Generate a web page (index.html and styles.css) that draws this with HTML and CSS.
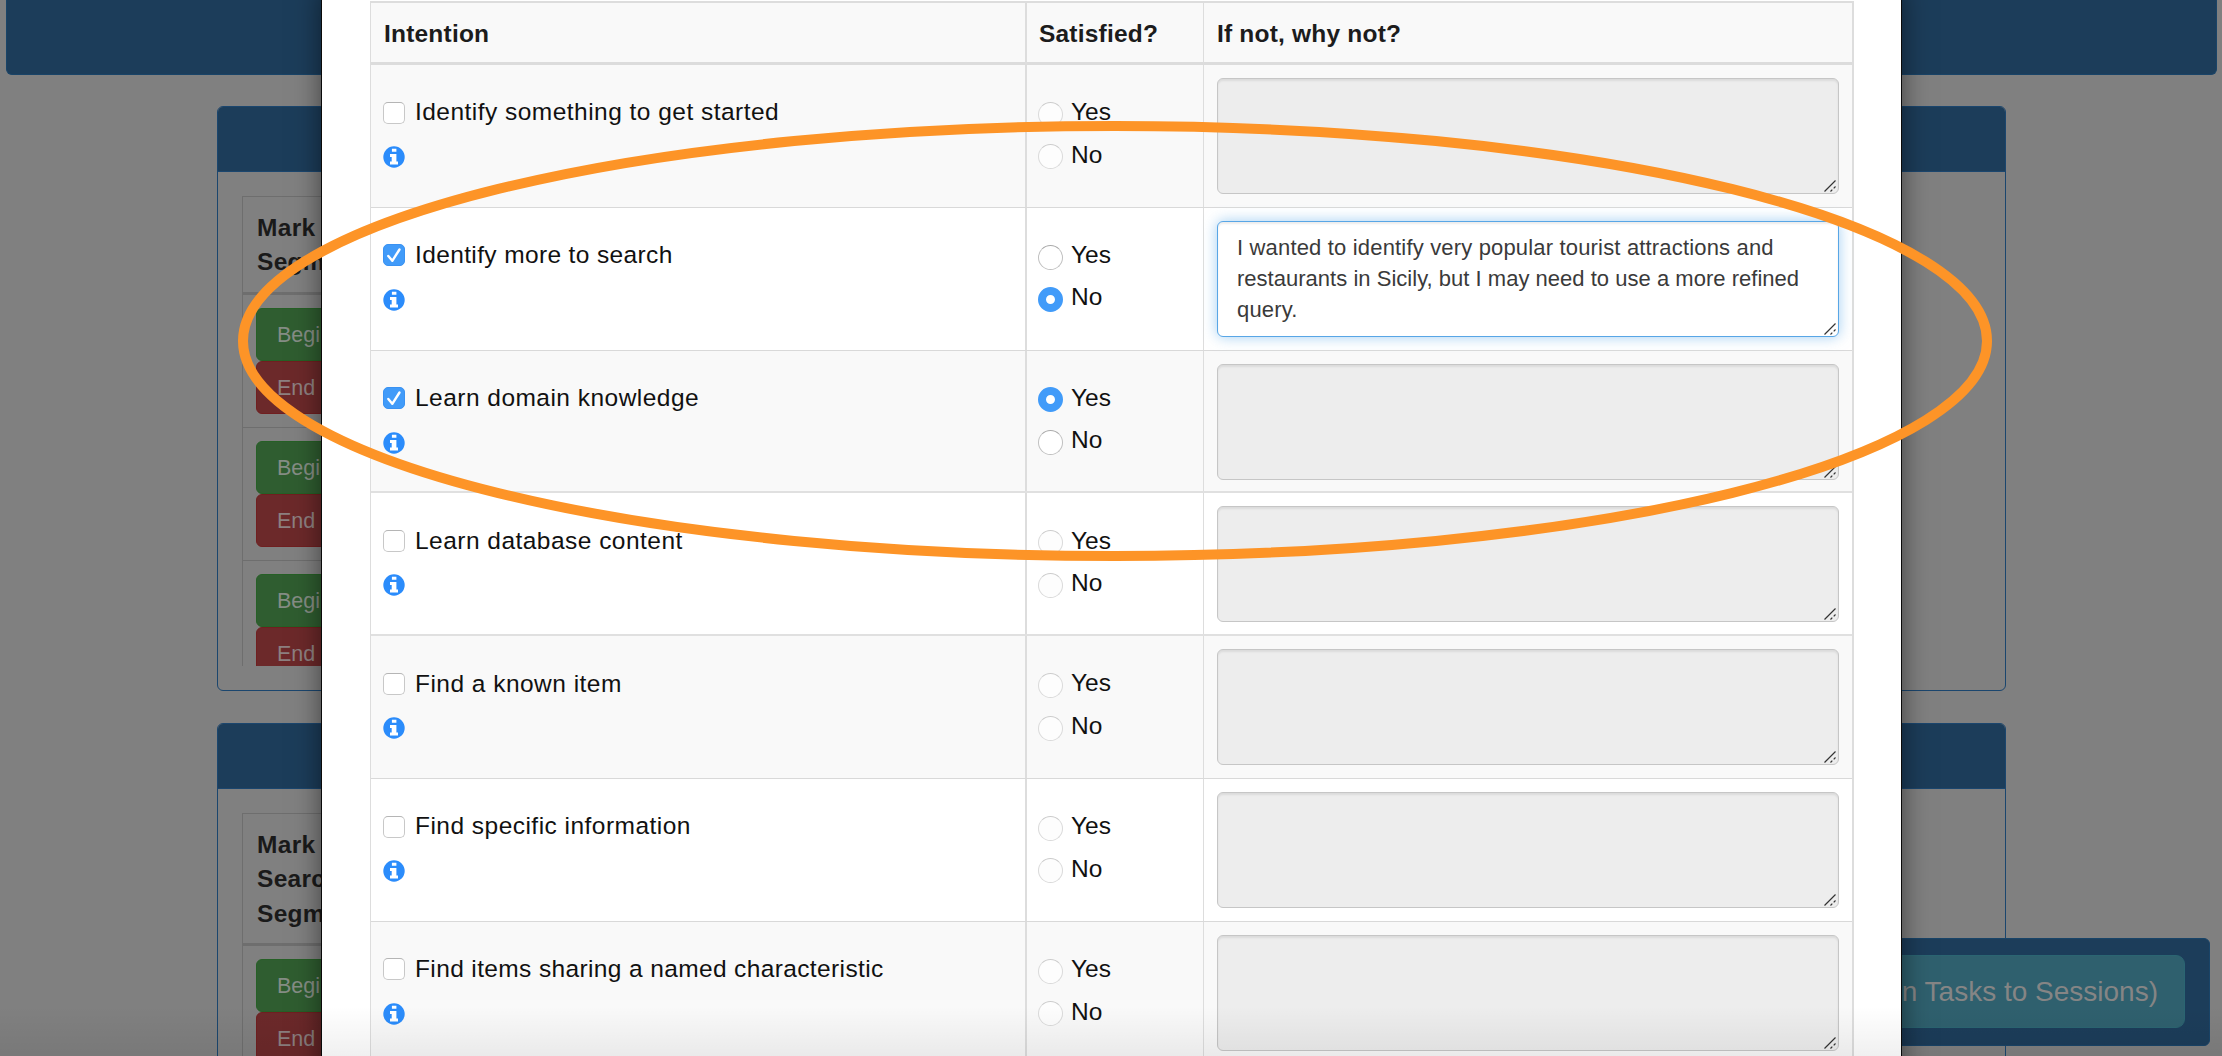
FILE: index.html
```html
<!DOCTYPE html>
<html lang="en">
<head>
<meta charset="utf-8">
<title>Search intentions</title>
<link rel="stylesheet" href="styles.css">
</head>
<body>
<svg class="defs" aria-hidden="true">
  <symbol id="info" viewBox="0 0 22 22"><circle cx="11" cy="11" r="10.7" fill="#2b8cfb"/><path fill="#fff" d="M8.900 2.700h4.500v3.100H8.900zM7 8h6.400v7.600h1.600v3H7v-3h1.700v-4.700H7z"/></symbol>
  <symbol id="grip" viewBox="0 0 12 12"><path d="M.5 11.500l11-11M6.500 11.500l1.800-1.800M9.700 8.300l1.800-1.800" fill="none" stroke="#333" stroke-width="1.200"/></symbol>
</svg>

<div class="page">
  <div class="topbar"></div>
  <section class="panel panel-first">
    <div class="panel-head"></div>
    <div class="segments">
      <div class="seg-title">Mark<br>Segment</div>
      <div class="seg-row"><span class="btn begin">Begin</span><span class="btn end">End</span></div>
      <div class="seg-row"><span class="btn begin">Begin</span><span class="btn end">End</span></div>
      <div class="seg-row"><span class="btn begin">Begin</span><span class="btn end">End</span></div>
    </div>
  </section>
  <section class="panel panel-second">
    <div class="panel-head"></div>
    <div class="segments">
      <div class="seg-title">Mark<br>Search<br>Segment</div>
      <div class="seg-row"><span class="btn begin">Begin</span><span class="btn end">End</span></div>
    </div>
  </section>
</div>
<div class="footer-bar"><span class="assign">Assign Tasks to Sessions)</span></div>

<main class="modal">
  <div class="table">
    <div class="row head"><div class="cell">Intention</div><div class="cell">Satisfied?</div><div class="cell">If not, why not?</div></div>

    <div class="row odd">
      <div class="cell what"><label><i class="check"></i>Identify something to get started</label><svg class="info"><use href="#info"/></svg></div>
      <div class="cell rate"><label><i class="radio off"></i>Yes</label><label><i class="radio off"></i>No</label></div>
      <div class="cell why"><div class="area"><svg class="grip"><use href="#grip"/></svg></div></div>
    </div>
    <div class="row">
      <div class="cell what snug"><label><i class="check on"><svg viewBox="0 0 22 22"><path d="M5.300 12l4 4.800 7.200-11.300"/></svg></i>Identify more to search</label><svg class="info"><use href="#info"/></svg></div>
      <div class="cell rate"><label><i class="radio"></i>Yes</label><label><i class="radio on"></i>No</label></div>
      <div class="cell why"><div class="area focus">I wanted to identify very popular tourist attractions and<br><span class="tight">restaurants in Sicily, but I may need to use a more refined</span><br>query.<svg class="grip"><use href="#grip"/></svg></div></div>
    </div>
    <div class="row odd thick">
      <div class="cell what"><label><i class="check on"><svg viewBox="0 0 22 22"><path d="M5.300 12l4 4.800 7.200-11.300"/></svg></i>Learn domain knowledge</label><svg class="info"><use href="#info"/></svg></div>
      <div class="cell rate"><label><i class="radio on"></i>Yes</label><label><i class="radio"></i>No</label></div>
      <div class="cell why"><div class="area"><svg class="grip"><use href="#grip"/></svg></div></div>
    </div>
    <div class="row thick">
      <div class="cell what"><label><i class="check"></i>Learn database content</label><svg class="info"><use href="#info"/></svg></div>
      <div class="cell rate"><label><i class="radio off"></i>Yes</label><label><i class="radio off"></i>No</label></div>
      <div class="cell why"><div class="area"><svg class="grip"><use href="#grip"/></svg></div></div>
    </div>
    <div class="row odd">
      <div class="cell what"><label><i class="check"></i>Find a known item</label><svg class="info"><use href="#info"/></svg></div>
      <div class="cell rate"><label><i class="radio off"></i>Yes</label><label><i class="radio off"></i>No</label></div>
      <div class="cell why"><div class="area"><svg class="grip"><use href="#grip"/></svg></div></div>
    </div>
    <div class="row">
      <div class="cell what"><label><i class="check"></i>Find specific information</label><svg class="info"><use href="#info"/></svg></div>
      <div class="cell rate"><label><i class="radio off"></i>Yes</label><label><i class="radio off"></i>No</label></div>
      <div class="cell why"><div class="area"><svg class="grip"><use href="#grip"/></svg></div></div>
    </div>
    <div class="row odd">
      <div class="cell what snug"><label><i class="check"></i>Find items sharing a named characteristic</label><svg class="info"><use href="#info"/></svg></div>
      <div class="cell rate"><label><i class="radio off"></i>Yes</label><label><i class="radio off"></i>No</label></div>
      <div class="cell why"><div class="area"><svg class="grip"><use href="#grip"/></svg></div></div>
    </div>
  </div>
</main>

<div class="bottom-shade"></div>
<svg class="highlight" viewBox="0 0 2222 1056"><ellipse cx="1115" cy="341" rx="872" ry="215"/></svg>
</body>
</html>
```

FILE: styles.css
```css
* { box-sizing: border-box; }
body {
  margin: 0;
  width: 2222px;
  height: 1056px;
  position: relative;
  overflow: hidden;
  background: #808080;
  color: #111;
  font: 24.5px/34.3px "Liberation Sans", Arial, sans-serif;
}
.defs { position: absolute; width: 0; height: 0; }

/* dimmed page behind the dialog */
.page { height: 1056px; overflow: hidden; }
.topbar {
  height: 75px;
  margin: 0 5px 31px 6px;
  background: #1c3d5a;
  border: 1px solid #194468;
  border-top: 0;
  border-radius: 0 0 6px 6px;
}
.panel {
  width: 1789px;
  margin: 0 0 32px 217px;
  border: 1.500px solid #1b466e;
  border-radius: 6px;
  overflow: hidden;
}
.panel-first { height: 585px; }
.panel-second { height: 420px; }
.panel-head { height: 65px; background: #1c3d5a; border-bottom: 1px solid #1b466e; }
.segments {
  width: 400px;
  margin: 24px 0 0 24px;
  border: 1px solid #6e6e6e;
  border-width: 1px 0 0 1px;
  overflow: hidden;
}
.panel-first .segments { height: 470px; }
.seg-title {
  padding: 14px 13px 12px 14px;
  border-bottom: 3px solid #6e6e6e;
  font-weight: bold;
  letter-spacing: .3px;
  color: #1a1a1a;
}
.seg-row {
  height: 133.300px;
  padding: 13px;
  border-bottom: 1px solid #6e6e6e;
  display: flex;
  flex-direction: column;
}
.btn {
  height: 53.300px;
  flex: none;
  padding: 0 20px;
  border-radius: 6px;
  border: 1px solid;
  font-size: 21.500px;
  line-height: 52px;
  color: #858d85;
}
.begin { background: #2f5d30; border-color: #266026; }
.end { background: #6c292a; border-color: #701f20; color: #8d8080; }
.footer-bar {
  position: absolute;
  left: 1200px;
  top: 938px;
  width: 1010px;
  height: 108px;
  padding: 16px 24px;
  background: #1c3d5a;
  border: 1px solid #194468;
  border-radius: 6px;
  display: flex;
  justify-content: flex-end;
}
.assign {
  height: 73px;
  padding: 0 26px 0 27px;
  border: 1px solid #2b6572;
  border-radius: 9px;
  background: #2f606e;
  color: #858585;
  font-size: 28px;
  line-height: 71px;
}

/* dialog */
.modal {
  position: absolute;
  left: 321px;
  top: -20px;
  width: 1581px;
  height: 1100px;
  padding: 20px 48px 0 49px;
  background: #fff;
  background-clip: padding-box;
  border: 1px solid #0a0a0a;
  box-shadow: 0 9px 26px rgba(0, 0, 0, .5);
}
.table {
  width: 1484px;
  border: 2px solid #ddd;
  border-left-width: 1px;
  margin-left: -1px;
}
.row {
  height: 142.830px;
  display: grid;
  grid-template-columns: 656px 177px 1fr;
  border-bottom: 1px solid #d9d9d9;
}
.row.thick { border-bottom: 2px solid #e0e0e0; }
.row.odd { background: #f9f9f9; }
.row.head {
  height: 62px;
  background: #f9f9f9;
  border-bottom: 3px solid #dcdcdc;
  font-weight: bold;
  line-height: 61px;
  letter-spacing: .2px;
  color: #1c1c1c;
}
.cell { padding: 0 13px; border-right: 2px solid #ddd; }
.cell:nth-child(2) { padding-left: 11px; border-right-width: 1px; }
.head .cell:nth-child(2) { padding-left: 12px; }
.cell:nth-child(3) { border-right: 0; }
.what { padding: 30px 12px 0; display: flex; flex-direction: column; align-items: flex-start; letter-spacing: .470px; }
.what.snug { letter-spacing: .370px; }
.what label { display: flex; align-items: center; height: 35px; gap: 10px; }
.info { width: 22px; height: 22px; margin: 16px 0 0; }
.check {
  width: 22px;
  height: 22px;
  margin-top: 6.500px;
  align-self: flex-start;
  border: 1px solid #c8c8c8;
  border-top-color: #b5b5b5;
  border-radius: 5px;
  background: #fff;
}
.check.on { border-color: #3a92f2; background: #419bf9; }
.check svg { display: block; width: 22px; height: 22px; margin: -1px; }
.check path { fill: none; stroke: #fff; stroke-width: 2.400; stroke-linecap: round; stroke-linejoin: round; }
.rate { padding-top: 26px; }
.rate label { display: flex; align-items: center; gap: 8px; height: 42.500px; }
.radio {
  width: 25px;
  height: 25px;
  margin-top: 4px;
  border: 1px solid #c0c0c0;
  border-top-color: #aaa;
  border-radius: 50%;
  background: #fff;
}
.radio.off { border-color: #dadada; border-top-color: #ccc; background: #fdfdfd; }
.radio.on { border: 8px solid #419bf9; }
.why { padding-top: 13px; }
.area {
  position: relative;
  width: 622px;
  height: 116px;
  padding: 10px 19px;
  border: 1px solid #c6c6c6;
  border-radius: 6px;
  background: #ededed;
  box-shadow: inset 0 2px 2px rgba(0, 0, 0, .075);
  font-size: 22px;
  line-height: 31.300px;
  letter-spacing: .170px;
  color: #3a3a3a;
  white-space: nowrap;
}
.area .tight { letter-spacing: .020px; }
.area.focus {
  background: #fff;
  border: 1.500px solid #58a6e6;
  box-shadow: inset 0 2px 2px rgba(0, 0, 0, .075), 0 0 14px rgba(102, 175, 233, .6);
}
.grip { position: absolute; right: 2px; bottom: 1px; width: 12px; height: 12px; }

.bottom-shade {
  position: absolute;
  left: 0;
  top: 1006px;
  width: 2222px;
  height: 50px;
  background: linear-gradient(rgba(0, 0, 0, 0), rgba(0, 0, 0, .06));
}
.highlight { position: absolute; left: 0; top: 0; width: 2222px; height: 1056px; }
.highlight ellipse { fill: none; stroke: #fd9427; stroke-width: 10; }
```
